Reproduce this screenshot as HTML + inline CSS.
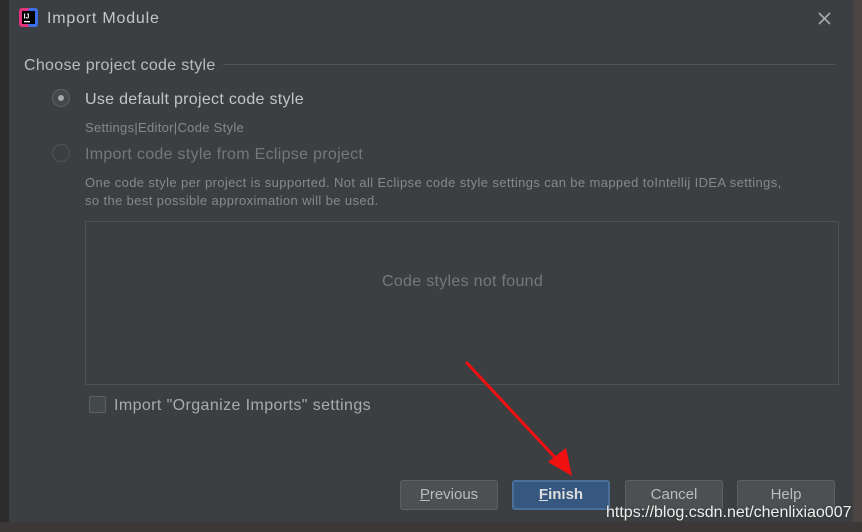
<!DOCTYPE html>
<html><head><meta charset="utf-8"><style>
*{margin:0;padding:0;box-sizing:border-box}
body{width:862px;height:532px;overflow:hidden;background:#3a3636;font-family:"Liberation Sans","Noto Sans CJK SC",sans-serif;position:relative}
.left{position:absolute;left:0;top:0;width:9px;height:532px;background:#2b2b2b}
.right{position:absolute;left:853px;top:0;width:9px;height:532px;background:#4b4545}
.bottom{position:absolute;left:0;top:522px;width:862px;height:10px;background:#3d3838}
.dlg{position:absolute;left:9px;top:0;width:844px;height:522px;background:#3c3f41;color:#bbbbbb}
.t{position:absolute;white-space:nowrap}
.btn{position:absolute;top:480px;height:30px;border:1px solid #5e6060;background:#4c5052;border-radius:3px;color:#bbb;font-size:15px;text-align:center;line-height:28px}
.radio{position:absolute;width:18px;height:18px;border-radius:50%;border:1px solid #5e6163;background:#43494a}
</style></head><body>
<div class="left"></div><div class="right"></div><div class="bottom"></div>
<div class="dlg">
  <svg style="position:absolute;left:10px;top:8px" width="19" height="19" viewBox="0 0 19 19">
    <rect x="0" y="0" width="19" height="19" rx="3" fill="#e0357b"/>
    <rect x="9" y="0" width="10" height="19" rx="3" fill="#3b6ee8"/>
    <rect x="3" y="3" width="13" height="13" fill="#000"/>
    <rect x="5" y="13" width="6" height="1.3" fill="#fff"/>
    <text x="4.6" y="10.5" font-size="7" font-weight="bold" fill="#fff" font-family="Liberation Sans">IJ</text>
  </svg>
  <div class="t" style="left:38px;top:10px;font-size:16px;color:#c6c6c6;letter-spacing:0.8px">Import Module</div>
  <svg style="position:absolute;left:809px;top:12px" width="13" height="13"><path d="M1 1L12 12M12 1L1 12" stroke="#aaa" stroke-width="1.6"/></svg>
  <div class="t" style="left:15px;top:57px;font-size:16px;letter-spacing:0.3px">Choose project code style</div>
  <div style="position:absolute;left:214px;top:64px;width:612px;height:1px;background:#555"></div>
  <div class="radio" style="left:43px;top:89px"><div style="position:absolute;left:5px;top:5px;width:6px;height:6px;border-radius:50%;background:#aaa"></div></div>
  <div class="t" style="left:76px;top:91px;font-size:16px;color:#c4c4c4;letter-spacing:0.3px">Use default project code style</div>
  <div class="t" style="left:76px;top:120px;font-size:13px;color:#888;letter-spacing:0.3px">Settings|Editor|Code Style</div>
  <div class="radio" style="left:43px;top:144px;background:#3c3f41;border-color:#505355"></div>
  <div class="t" style="left:76px;top:146px;font-size:16px;color:#777;letter-spacing:0.3px">Import code style from Eclipse project</div>
  <div class="t" style="left:76px;top:174px;font-size:13px;color:#888;line-height:18px;letter-spacing:0.38px">One code style per project is supported. Not all Eclipse code style settings can be mapped toIntellij IDEA settings,<br>so the best possible approximation will be used.</div>
  <div style="position:absolute;left:76px;top:221px;width:754px;height:164px;border:1px solid #4e5254;background:#3c3f41"></div>
  <div class="t" style="left:373px;top:273px;font-size:16px;color:#777;letter-spacing:0.3px">Code styles not found</div>
  <div style="position:absolute;left:80px;top:396px;width:17px;height:17px;border:1px solid #5e6163;border-radius:2px;background:#43494a"></div>
  <div class="t" style="left:105px;top:397px;font-size:16px;color:#aaa;letter-spacing:0.4px">Import "Organize Imports" settings</div>
  <div class="btn" style="left:391px;width:98px"><u>P</u>revious</div>
  <div class="btn" style="left:503px;width:98px;background:#365880;border:2px solid #4a6f9a;color:#ddd;font-weight:bold;line-height:26px"><u>F</u>inish</div>
  <div class="btn" style="left:616px;width:98px">Cancel</div>
  <div class="btn" style="left:728px;width:98px">Help</div>
  <div class="t" style="left:597px;top:504px;font-size:16px;color:#eee;text-shadow:0 0 2px #333">https://blog.csdn.net/chenlixiao007</div>
</div>
<svg style="position:absolute;left:0;top:0" width="862" height="532">
  <path d="M466 362L563 466" stroke="#f01010" stroke-width="3"/>
  <path d="M572 476L548 462L566 448Z" fill="#f01010"/>
</svg>
</body></html>
